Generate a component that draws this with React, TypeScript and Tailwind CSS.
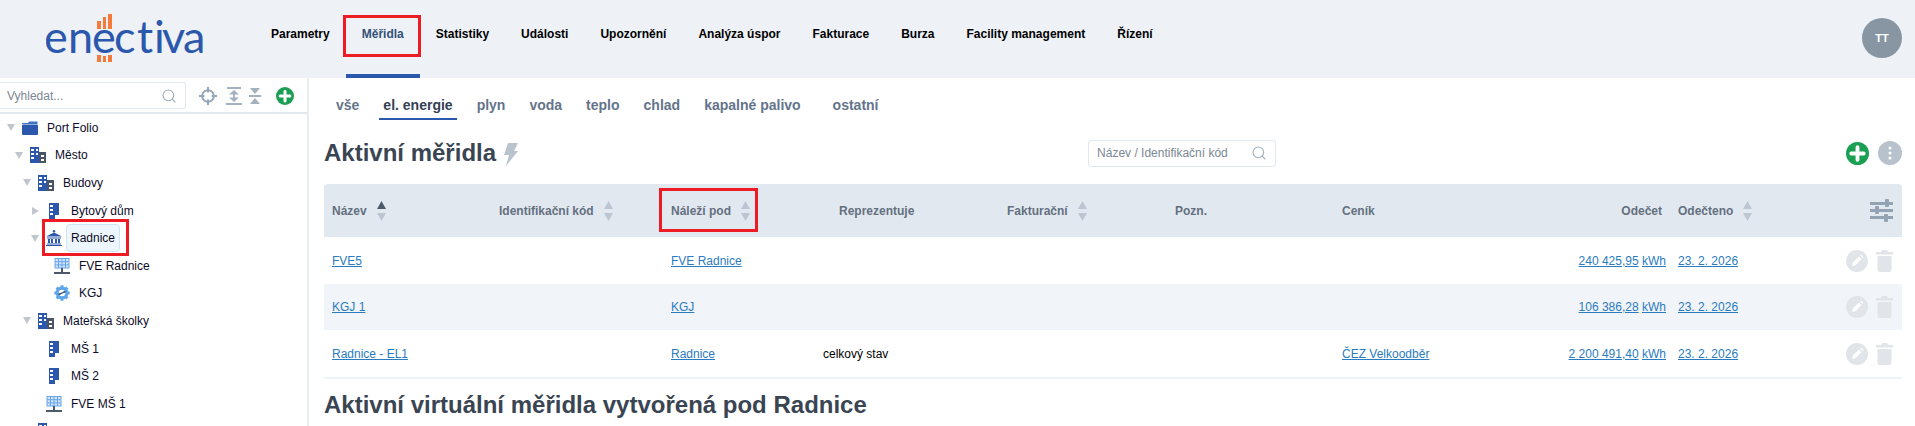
import React from "react";
import { Search } from "lucide-react";

const BLUE = "#2b58ac";

function Logo() {
  return (
    <svg width="170" height="56" viewBox="0 0 170 56" className="block">
      <g fill="#f47b3c">
        <rect x="51" y="11" width="4" height="8" />
        <rect x="57" y="7" width="3" height="12" />
        <rect x="62" y="4" width="4" height="15" />
        <rect x="51" y="45" width="4" height="7" />
        <rect x="57" y="46" width="3" height="6" />
        <rect x="62" y="45" width="4" height="7" />
        <rect x="112" y="13" width="3" height="3" />
      </g>
      <text x="-2 22 46 68 91 108 116 137" y="43" fontFamily="Lato, sans-serif" fontSize="45" fontWeight="400" fill={BLUE}>
        enectiva
      </text>
    </svg>
  );
}

function Circle({ s }: { s: number }) {
  return (
    <svg width={s} height={s} viewBox="0 0 24 24" className="block shrink-0">
      <circle cx="12" cy="12" r="12" fill="#1a9f53" />
      <path d="M12 5.5v13M5.5 12h13" stroke="#fff" strokeWidth="4" strokeLinecap="round" />
    </svg>
  );
}

function ExpandIcon() {
  return (
    <svg width="17" height="18" viewBox="0 0 17 18" fill="#a4b2c0" className="block">
      <rect x="1" y="0" width="14" height="2" />
      <path d="M8 3l5 4.5H3z" />
      <rect x="7" y="7" width="2" height="4" />
      <path d="M8 15l5-4.5H3z" />
      <rect x="0" y="16" width="16" height="2" />
    </svg>
  );
}

function CollapseIcon() {
  return (
    <svg width="12" height="16" viewBox="0 0 12 16" fill="#a4b2c0" className="block">
      <path d="M1 0h10L6 6z" />
      <rect x="0" y="7" width="12" height="2" />
      <path d="M1 16h10L6 10z" />
    </svg>
  );
}

function Target() {
  return (
    <svg width="18" height="18" viewBox="0 0 20 20" fill="none" stroke="#94a7b8" strokeWidth="2.2" className="block">
      <circle cx="10" cy="10" r="6.5" />
      <path d="M10 0v6M10 14v6M0 10h6M14 10h6" />
    </svg>
  );
}

function FolderIcon() {
  return (
    <svg width="16" height="16" viewBox="0 0 16 16" className="block">
      <path d="M0 3h6l1-1.5h8.5V4H0z" fill="#3f74c4" />
      <rect x="0" y="4.5" width="16" height="10.5" rx="1" fill={BLUE} />
    </svg>
  );
}

function BuildingsIcon() {
  return (
    <svg width="16" height="16" viewBox="0 0 16 16" className="block">
      <rect x="0" y="0" width="9" height="16" fill={BLUE} />
      <rect x="9" y="5" width="7" height="11" fill="#4b5563" />
      <g fill="#fff">
        <rect x="1" y="2" width="3" height="2" />
        <rect x="6" y="2" width="2" height="2" />
        <rect x="1" y="6" width="3" height="2" />
        <rect x="6" y="6" width="2" height="2" />
        <rect x="1" y="10" width="3" height="2" />
        <rect x="11" y="8" width="3" height="2" />
        <rect x="11" y="12" width="3" height="2" />
      </g>
    </svg>
  );
}

function BuildingIcon() {
  return (
    <svg width="11" height="16" viewBox="0 0 11 16" className="block">
      <rect x="0" y="0" width="10" height="16" fill={BLUE} />
      <g fill="#fff">
        <rect x="1" y="2" width="3" height="2" />
        <rect x="1" y="6" width="3" height="2" />
        <rect x="1" y="10" width="3" height="2" />
        <rect x="6" y="12" width="4" height="4" />
      </g>
    </svg>
  );
}

function MuseumIcon() {
  return (
    <svg width="16" height="16" viewBox="0 0 16 16" fill={BLUE} className="block">
      <circle cx="8" cy="1.2" r="1.2" />
      <path d="M8 2.5L16 6.5H0z" />
      <rect x="1" y="7.5" width="14" height="1" />
      <rect x="2" y="9" width="2" height="4" />
      <rect x="5" y="9" width="2" height="4" />
      <rect x="9" y="9" width="2" height="4" />
      <rect x="12" y="9" width="2" height="4" />
      <rect x="1" y="13.5" width="14" height="1" />
      <rect x="0" y="15" width="16" height="1" />
    </svg>
  );
}

function SolarIcon() {
  return (
    <svg width="16" height="16" viewBox="0 0 16 16" className="block">
      <rect x="1" y="0.5" width="14" height="9.5" fill="#cfe2f8" stroke="#6aa6e8" />
      <path d="M4.5 0.5v9.5M8 0.5v9.5M11.5 0.5v9.5M1 3.7h14M1 6.9h14" stroke="#6aa6e8" fill="none" />
      <rect x="7" y="10" width="2" height="4" fill="#4a5a6a" />
      <rect x="0" y="14" width="16" height="2" fill="#4a5a6a" />
    </svg>
  );
}

function GearIcon() {
  return (
    <svg width="16" height="16" viewBox="0 0 16 16" className="block">
      <circle cx="8" cy="8" r="6.4" fill="#5ea5ea" />
      <path d="M8 0.3v15.4M0.3 8h15.4M2.6 2.6l10.8 10.8M13.4 2.6L2.6 13.4" stroke="#5ea5ea" strokeWidth="3" />
      <circle cx="8" cy="8" r="3.3" fill="#fff" />
      <path d="M5.4 9.2l5.2-2.4" stroke="#3b5f86" strokeWidth="1.4" />
      <circle cx="5.4" cy="9.2" r="1.1" fill="#3b5f86" />
      <circle cx="10.6" cy="6.8" r="1.1" fill="#3b5f86" />
    </svg>
  );
}

function Caret({ open }: { open?: boolean }) {
  return open ? (
    <svg width="8" height="7" viewBox="0 0 8 7" className="block"><path d="M0 0h8L4 7z" fill="#c0c6cd" /></svg>
  ) : (
    <svg width="7" height="8" viewBox="0 0 7 8" className="block"><path d="M0 0v8l7-4z" fill="#c0c6cd" /></svg>
  );
}

type Node = { label: string; level: number; caret?: "open" | "closed"; icon: React.ReactNode; selected?: boolean };

const tree: Node[] = [
  { label: "Port Folio", level: 0, caret: "open", icon: <FolderIcon /> },
  { label: "Město", level: 1, caret: "open", icon: <BuildingsIcon /> },
  { label: "Budovy", level: 2, caret: "open", icon: <BuildingsIcon /> },
  { label: "Bytový dům", level: 3, caret: "closed", icon: <BuildingIcon /> },
  { label: "Radnice", level: 3, caret: "open", icon: <MuseumIcon />, selected: true },
  { label: "FVE Radnice", level: 4, icon: <SolarIcon /> },
  { label: "KGJ", level: 4, icon: <GearIcon /> },
  { label: "Mateřská školky", level: 2, caret: "open", icon: <BuildingsIcon /> },
  { label: "MŠ 1", level: 3, icon: <BuildingIcon /> },
  { label: "MŠ 2", level: 3, icon: <BuildingIcon /> },
  { label: "FVE MŠ 1", level: 3, icon: <SolarIcon /> },
  { label: "Areál školy", level: 2, caret: "closed", icon: <BuildingsIcon /> },
];

function TreeRow({ n }: { n: Node }) {
  return (
    <div className="relative flex h-[27.6px] items-center text-[12px] text-[#0b0b28]" style={{ paddingLeft: n.level * 8 }}>
      <div className="flex w-[22px] shrink-0 justify-center">{n.caret && <Caret open={n.caret === "open"} />}</div>
      <div className="flex w-[16px] shrink-0 justify-center">{n.icon}</div>
      <div className={n.selected ? "ml-[4px] flex h-[28px] w-[54px] items-center rounded-[4px] border border-[#cfe3f7] bg-[#eef6fd] pl-[4px]" : "ml-[9px]"}>{n.label}</div>
    </div>
  );
}

function Sort({ active }: { active?: boolean }) {
  return (
    <svg width="9" height="20" viewBox="0 0 9 20" className="ml-[10px] block shrink-0">
      <path d="M4.5 0L9 8H0z" fill={active ? "#4b5a6c" : "#bcc6d2"} />
      <path d="M4.5 20L9 12H0z" fill="#bcc6d2" />
    </svg>
  );
}

function Sliders() {
  return (
    <svg width="23" height="23" viewBox="0 0 23 23" className="block" fill="#94a3b3">
      <rect x="0" y="3" width="23" height="3" />
      <rect x="15" y="0" width="4" height="8" rx="1" />
      <rect x="0" y="10" width="23" height="3" />
      <rect x="5" y="7" width="4" height="8" rx="1" />
      <rect x="0" y="17" width="23" height="3" />
      <rect x="14" y="15" width="4" height="8" rx="1" />
    </svg>
  );
}

function Actions() {
  return (
    <div className="flex items-center justify-end gap-[8px] pr-[9px]">
      <svg width="22" height="22" viewBox="0 0 22 22" className="block">
        <circle cx="11" cy="11" r="11" fill="#e1e4e8" />
        <path d="M6 16l.8-3.4 6.2-6.2 2.6 2.6-6.2 6.2zM14 5.4l1-1 2.6 2.6-1 1z" fill="#fff" />
      </svg>
      <svg width="17" height="22" viewBox="0 0 17 22" className="block" fill="#e1e4e8">
        <path d="M6 0h5l1 2h5v2.5H0V2h5z" />
        <path d="M1.5 6h14v14a2 2 0 01-2 2h-10a2 2 0 01-2-2z" />
      </svg>
    </div>
  );
}

const linkCls = "text-[#2b7bc0] underline";

const rows = [
  { name: "FVE5", parent: "FVE Radnice", rep: "", tariff: "", value: "240 425,95", bg: "bg-white", h: "h-[47px]" },
  { name: "KGJ 1", parent: "KGJ", rep: "", tariff: "", value: "106 386,28", bg: "bg-[#f1f4f8]", h: "h-[46px]" },
  { name: "Radnice - EL1", parent: "Radnice", rep: "celkový stav", tariff: "ČEZ Velkoodběr", value: "2 200 491,40", bg: "bg-white", h: "h-[49px]" },
];

const navItems = ["Parametry", "Měřidla", "Statistiky", "Události", "Upozornění", "Analýza úspor", "Fakturace", "Burza", "Facility management", "Řízení"];
const tabs = ["vše", "el. energie", "plyn", "voda", "teplo", "chlad", "kapalné palivo"];

export default function App() {
  return (
    <div className="relative h-[426px] w-[1915px] overflow-hidden bg-white font-['Liberation_Sans',Arial,sans-serif]">
      {/* Top bar */}
      <header className="flex h-[78px] items-stretch bg-[#eef2f6]">
        <div className="flex w-[255px] shrink-0 items-start pl-[46px] pt-[10px]">
          <Logo />
        </div>
        <nav className="flex flex-1 items-stretch">
          {navItems.map((n) => {
            const active = n === "Měřidla";
            return (
              <div key={n} className={`flex items-start border-b-4 px-[16px] pt-[26px] text-[12px] font-bold leading-[16px] ${active ? "border-[#2b58ac] text-[#34507a]" : "border-transparent text-black"}`}>
                {n}
              </div>
            );
          })}
        </nav>
        <div className="mr-[13px] mt-[18px] flex h-[40px] w-[40px] items-center justify-center rounded-full bg-[#8896a3] text-[11px] font-bold text-white">TT</div>
      </header>

      <div className="flex h-[348px]">
        {/* Sidebar */}
        <aside className="w-[309px] shrink-0 border-r-2 border-[#e8edf3]">
          <div className="flex h-[36px] items-center border-b-2 border-[#e2e8f0] pt-[1px]">
            <div className="flex h-[27px] w-[186px] items-center justify-between rounded-r-[3px] border border-l-0 border-[#e2e8f0] pl-[7px] pr-[8px] text-[12px] text-[#7b8794]">
              <span>Vyhledat...</span>
              <Search size={16} strokeWidth={1.6} color="#a0aebb" />
            </div>
            <div className="ml-[13px]"><Target /></div>
            <div className="ml-[9px]"><ExpandIcon /></div>
            <div className="ml-[6px]"><CollapseIcon /></div>
            <div className="ml-[15px]"><Circle s={18} /></div>
          </div>
          <div>
            {tree.map((n) => <TreeRow key={n.label} n={n} />)}
          </div>
        </aside>

        {/* Main */}
        <main className="min-w-0 flex-1 pl-[15px] pr-[13px]">
          <div className="flex h-[42px] items-end gap-[16px] pl-[8px] text-[14px] font-bold text-[#64748b]">
            {tabs.map((t) => (
              <div key={t} className={`flex h-[28px] items-center border-b-2 px-[4px] ${t === "el. energie" ? "border-[#2b58ac] text-[#334155]" : "border-transparent"}`}>{t}</div>
            ))}
            <div className="ml-[8px] flex h-[28px] items-center border-b-2 border-transparent px-[4px]">ostatní</div>
          </div>

          <div className="relative mt-[16px] mb-[14px] flex h-[34px] items-center">
            <h1 className="text-[24px] font-bold leading-[34px] text-[#3a4553]">Aktivní měřidla</h1>
            <svg width="15" height="23" viewBox="0 0 15 23" className="ml-[7px] mt-[3px] block">
              <path d="M5 0h10l-4 8h4L3 23l3-11H1z" fill="#b9c3ce" />
            </svg>
            <div className="ml-[570px] flex h-[27px] w-[188px] items-center justify-between rounded-[3px] border border-[#e2e8f0] pl-[8px] pr-[8px] text-[12px] text-[#7b8794]">
              <span>Název / Identifikační kód</span>
              <Search size={16} strokeWidth={1.6} color="#a0aebb" />
            </div>
            <div className="ml-auto flex items-center gap-[9px]">
              <Circle s={23} />
              <div className="flex h-[24px] w-[24px] items-center justify-center rounded-full bg-[#b8c2cd]">
                <svg width="4" height="14" viewBox="0 0 4 14" fill="#fff" className="block">
                  <circle cx="2" cy="2" r="1.5" /><circle cx="2" cy="7" r="1.5" /><circle cx="2" cy="12" r="1.5" />
                </svg>
              </div>
            </div>
          </div>

          <table className="w-[1578px] table-fixed border-separate border-spacing-0 text-[12px]">
            <colgroup>
              <col className="w-[167px]" />
              <col className="w-[172px]" />
              <col className="w-[152px]" />
              <col className="w-[184px]" />
              <col className="w-[168px]" />
              <col className="w-[167px]" />
              <col className="w-[166px]" />
              <col className="w-[170px]" />
              <col className="w-[160px]" />
              <col className="w-[72px]" />
            </colgroup>
            <thead>
              <tr className="h-[53px] bg-[#e2e8f0] text-left text-[12px] font-bold text-[#64707f]">
                <th className="rounded-tl-[4px] pl-[8px]"><span className="flex items-center">Název<Sort active /></span></th>
                <th className="pl-[8px]"><span className="flex items-center">Identifikační kód<Sort /></span></th>
                <th className="pl-[8px]"><span className="flex items-center">Náleží pod<Sort /></span></th>
                <th className="pl-[24px]">Reprezentuje</th>
                <th className="pl-[8px]"><span className="flex items-center">Fakturační<Sort /></span></th>
                <th className="pl-[8px]">Pozn.</th>
                <th className="pl-[8px]">Ceník</th>
                <th className="pr-[8px] text-right">Odečet</th>
                <th className="pl-[8px]"><span className="flex items-center">Odečteno<Sort /></span></th>
                <th className="rounded-tr-[4px] pr-[9px]"><span className="flex justify-end"><Sliders /></span></th>
              </tr>
            </thead>
            <tbody>
              {rows.map((r, i) => {
                const b = i === 2 ? "border-b-2 border-[#f1f4f7]" : "";
                return (
                  <tr key={r.name} className={`${r.h} ${r.bg}`}>
                    <td className={`pl-[8px] ${b}`}><span className={linkCls}>{r.name}</span></td>
                    <td className={b}></td>
                    <td className={`pl-[8px] ${b}`}><span className={linkCls}>{r.parent}</span></td>
                    <td className={`pl-[8px] text-black ${b}`}>{r.rep}</td>
                    <td className={b}></td>
                    <td className={b}></td>
                    <td className={`pl-[8px] ${b}`}>{r.tariff && <span className={linkCls}>{r.tariff}</span>}</td>
                    <td className={`pr-[4px] text-right ${b}`}>
                      <span className={linkCls}>{r.value}</span> <span className={linkCls}>kWh</span>
                    </td>
                    <td className={`pl-[8px] ${b}`}><span className={linkCls}>23. 2. 2026</span></td>
                    <td className={b}><Actions /></td>
                  </tr>
                );
              })}
            </tbody>
          </table>

          <h2 className="mt-[9px] text-[24px] font-bold leading-[34px] text-[#3a4553]">Aktivní virtuální měřidla vytvořená pod Radnice</h2>
        </main>
      </div>

      {/* Red annotation boxes drawn over the screenshot */}
      <div className="pointer-events-none absolute left-[343px] top-[15px] h-[42px] w-[78px] border-[3px] border-[#ed1c24]" />
      <div className="pointer-events-none absolute left-[42px] top-[219px] h-[37px] w-[87px] border-[3px] border-[#ed1c24]" />
      <div className="pointer-events-none absolute left-[659px] top-[188px] h-[44px] w-[99px] border-[3px] border-[#ed1c24]" />
    </div>
  );
}
